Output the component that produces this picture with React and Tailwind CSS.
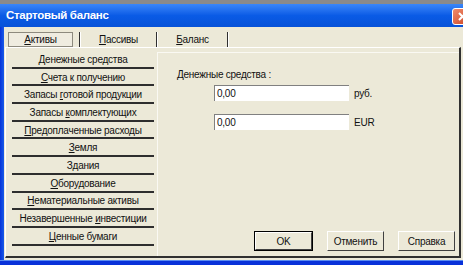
import React from "react";

const U = ({ children }) => <span className="underline underline-offset-[1px]">{children}</span>;

const items = [
  <>Денежные средства</>,
  <><U>С</U>чета к получению</>,
  <>Запасы <U>г</U>отовой продукции</>,
  <>Запасы <U>к</U>омплектующих</>,
  <><U>П</U>редоплаченные расходы</>,
  <><U>З</U>емля</>,
  <>З<U>д</U>ания</>,
  <><U>О</U>борудование</>,
  <><U>Н</U>ематериальные активы</>,
  <>Незавершенные <U>и</U>нвестиции</>,
  <><U>Ц</U>енные бумаги</>,
];

function Btn({ children, def, className }) {
  return (
    <div className={`h-[20px] ${def ? "border border-black" : ""} ${className}`}>
      <div className="h-full border-t border-l border-white border-r border-b border-r-[#404040] border-b-[#404040] flex items-center justify-center bg-[#ECE9D8]">
        {children}
      </div>
    </div>
  );
}

export default function App() {
  return (
    <div
      className="w-[463px] h-[265px] overflow-hidden flex flex-col bg-[#ECE9D8] text-[10px] tracking-[-0.25px] text-[#111]"
      style={{ fontFamily: '"Liberation Sans", Arial, sans-serif' }}
    >
      <div className="h-[4px] bg-[#8a8a8a] shrink-0" />
      <div className="h-[23px] shrink-0 flex items-center bg-gradient-to-b from-[#3a86f8] via-[#0a5be6] to-[#0752d8] pl-[6px]">
        <span className="text-white font-bold text-[11.5px] tracking-[-0.3px]">Стартовый баланс</span>
        <div className="ml-auto mr-[-10px] w-[21px] h-[17px] rounded-[3px] border border-white bg-gradient-to-br from-[#f08b6b] to-[#c9411e] flex items-center justify-center mt-[1px]">
          <svg width="9" height="9" viewBox="0 0 9 9">
            <path d="M1 1 L8 8 M8 1 L1 8" stroke="white" strokeWidth="2" />
          </svg>
        </div>
      </div>
      <div className="flex-1 flex min-h-0">
        <div className="w-[4px] bg-gradient-to-r from-[#0831d9] to-[#1a5ae8] shrink-0" />
        <div className="flex-1 flex flex-col min-w-0">
          {/* tabs */}
          <div className="h-[20px] pt-[5px] pl-[4px] flex shrink-0">
            <div className="w-[71px] flex">
              <div className="w-[65px] h-[15px] border border-[#8d8a7e] bg-[#efece0] flex items-center justify-center">
                <span><U>А</U>ктивы</span>
              </div>
            </div>
            <div className="w-[2px] h-[15px] bg-[#303030] border-r border-white" />
            <div className="w-[75px] h-[15px] flex items-center justify-center">
              <span><U>П</U>ассивы</span>
            </div>
            <div className="w-[2px] h-[15px] bg-[#303030] border-r border-white" />
            <div className="w-[69px] h-[15px] flex items-center justify-center">
              <span><U>Б</U>аланс</span>
            </div>
            <div className="w-[2px] h-[15px] bg-[#303030] border-r border-white" />
          </div>
          {/* panel */}
          <div className="h-[211px] ml-[1px] mr-[2px] border-t border-l border-white border-r-2 border-b-2 border-r-[#303030] border-b-[#303030] flex shrink-0">
            <div className="w-[148px] pt-[3px] pl-[6px] shrink-0">
              {items.map((t, i) => (
                <div key={i} className="h-[17.7px] border-b-2 border-[#2e2e2e] flex items-center justify-center pt-[1px] whitespace-nowrap">
                  <span>{t}</span>
                </div>
              ))}
            </div>
            <div className="flex-1 flex flex-col mt-[4px] ml-[3px] border-l border-t border-[#faf9f3] pb-[5px] pr-[4px]">
              <div className="pl-[19px] pt-[15px] leading-[13px]">Денежные средства :</div>
              <div className="flex items-center mt-[4px] pl-[56px]">
                <div className="w-[135px] h-[16px] bg-white border-t border-l border-[#808080] flex items-center pl-[2px]">0,00</div>
                <span className="ml-[5px]">руб.</span>
              </div>
              <div className="flex items-center mt-[13px] pl-[56px]">
                <div className="w-[135px] h-[16px] bg-white border-t border-l border-[#808080] flex items-center pl-[2px]">0,00</div>
                <span className="ml-[5px]">EUR</span>
              </div>
              <div className="mt-auto flex justify-end gap-[14px]">
                <Btn def className="w-[59px]">OK</Btn>
                <Btn className="w-[57px]">Отменить</Btn>
                <Btn className="w-[57px]">Справка</Btn>
              </div>
            </div>
          </div>
        </div>
      </div>
      <div className="h-[5px] shrink-0 bg-[#0831d9] border-t border-[#5a8cf0]" />
    </div>
  );
}
